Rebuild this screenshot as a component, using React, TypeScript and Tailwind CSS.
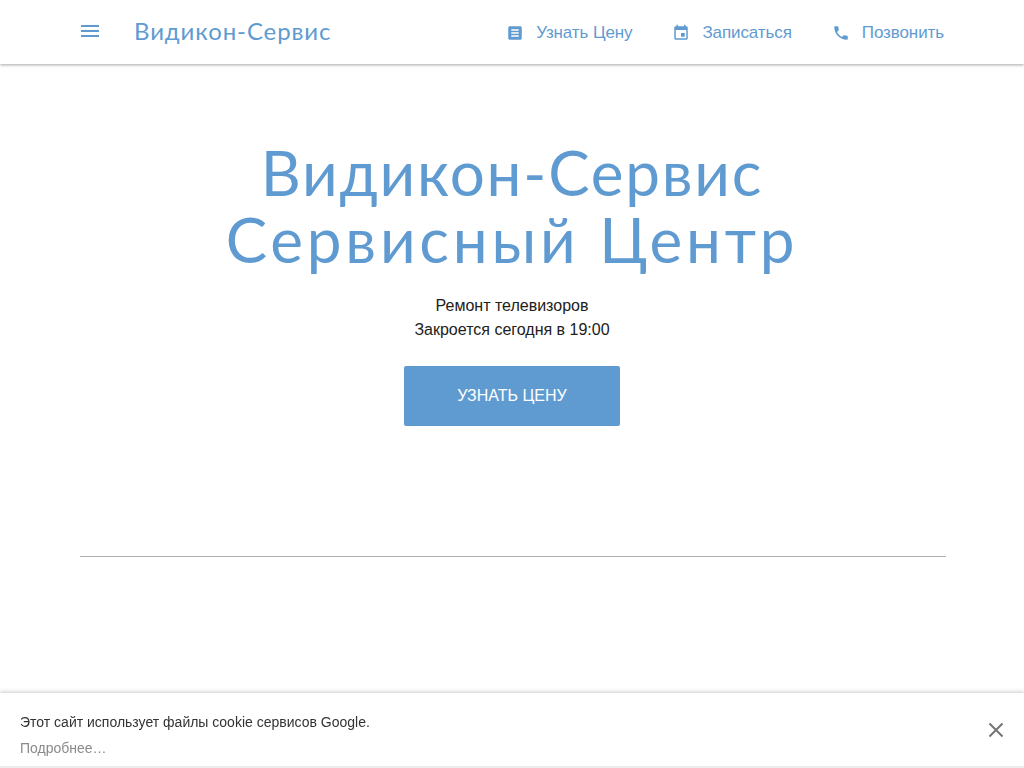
import React from "react";

const Blue = "text-[#5f9bd1]";

function NavItem({ icon, label }: { icon: React.ReactNode; label: string }) {
  return (
    <a className="flex items-center gap-[12px] text-[17px] leading-[24px] text-[#5f9bd1] tracking-[-0.1px]">
      <svg width="18" height="18" viewBox="0 0 24 24" fill="#5f9bd1" className="w-[18px] h-[18px]">
        {icon}
      </svg>
      <span>{label}</span>
    </a>
  );
}

export default function App() {
  return (
    <div className="h-[768px] overflow-hidden bg-white font-['Liberation_Sans',Arial,sans-serif] relative">
      <header className="h-[64px] bg-white shadow-[0_1px_3px_rgba(0,0,0,0.35)] flex items-center pl-[80px] pr-[80px] relative">
        <svg width="24" height="24" viewBox="0 0 24 24" fill="#5f9bd1" className="ml-[-2px] mb-[2px]">
          <path d="M3 18h18v-2H3v2zm0-5h18v-2H3v2zm0-7v2h18V6H3z" />
        </svg>
        <div className={`ml-[32px] mb-[3px] text-[24px] leading-[32px] font-['Lato',sans-serif] tracking-[0.9px] ${Blue}`}>Видикон-Сервис</div>
        <nav className="ml-auto mt-[2px] flex items-center gap-[40px]">
          <NavItem label="Узнать Цену" icon={<path fillRule="evenodd" d="M5 3h14c1.1 0 2 .9 2 2v14c0 1.1-.9 2-2 2H5c-1.1 0-2-.9-2-2V5c0-1.1.9-2 2-2zm2 4v2h10V7H7zm0 4v2h10v-2H7zm0 4v2h10v-2H7z" />} />
          <NavItem label="Записаться" icon={<path d="M17 12h-5v5h5v-5zM16 1v2H8V1H6v2H5c-1.11 0-1.99.9-1.99 2L3 19c0 1.1.89 2 2 2h14c1.1 0 2-.9 2-2V5c0-1.1-.9-2-2-2h-1V1h-2zm3 18H5V8h14v11z" />} />
          <NavItem label="Позвонить" icon={<path d="M6.62 10.79c1.44 2.83 3.76 5.14 6.59 6.59l2.2-2.2c.27-.27.67-.36 1.02-.24 1.12.37 2.33.57 3.57.57.55 0 1 .45 1 1V20c0 .55-.45 1-1 1-9.39 0-17-7.61-17-17 0-.55.45-1 1-1h3.5c.55 0 1 .45 1 1 0 1.25.2 2.45.57 3.57.11.35.03.74-.25 1.02l-2.2 2.2z" />} />
        </nav>
      </header>

      <main className="flex flex-col items-center">
        <h1 className={`mt-[75px] text-[62px] leading-[67px] text-center font-['Lato',sans-serif] font-normal ${Blue}`}>
          <div className="tracking-[1.8px]">Видикон-Сервис</div>
          <div className="tracking-[3.8px]">Сервисный Центр</div>
        </h1>
        <div className="mt-[21px] text-[16px] leading-[24px] text-center text-[#212121]">
          <div>Ремонт телевизоров</div>
          <div>Закроется сегодня в 19:00</div>
        </div>
        <a className="mt-[24px] w-[216px] h-[60px] rounded-[2px] bg-[#5f9bd1] text-white text-[16px] flex items-center justify-center">
          УЗНАТЬ ЦЕНУ
        </a>
        <div className="mt-[130px] ml-[2px] w-[866px] h-px bg-[#b0b0b0]" />
      </main>

      <div className="fixed left-0 right-0 bottom-0 h-[75px] bg-white border-b-2 border-[#ececec] shadow-[0_-1px_4px_rgba(0,0,0,0.22)] flex items-center justify-between pl-[20px] pr-[18px]">
        <div className="text-[14px] leading-[26px] mt-[10px]">
          <div className="text-[#333333]">Этот сайт использует файлы cookie сервисов Google.</div>
          <div className="text-[#8a8a8a]">Подробнее…</div>
        </div>
        <svg width="20" height="20" viewBox="0 0 20 20" stroke="#757575" strokeWidth="2" fill="none">
          <path d="M3.5 3.5l13 13M16.5 3.5l-13 13" />
        </svg>
      </div>
    </div>
  );
}
